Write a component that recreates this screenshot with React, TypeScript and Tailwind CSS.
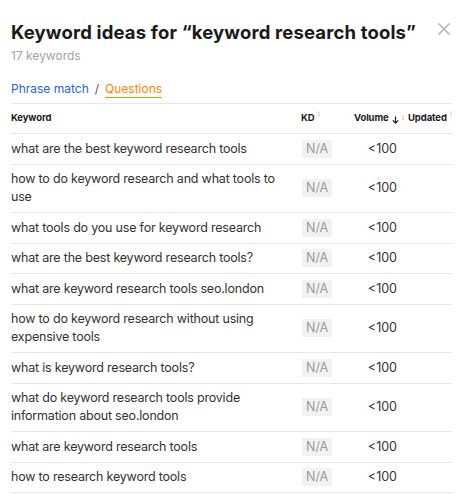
import React from "react";

const rows: { k: string; two?: boolean }[] = [
  { k: "what are the best keyword research tools" },
  { k: "how to do keyword research and what tools to use", two: true },
  { k: "what tools do you use for keyword research" },
  { k: "what are the best keyword research tools?" },
  { k: "what are keyword research tools seo.london" },
  { k: "how to do keyword research without using expensive tools", two: true },
  { k: "what is keyword research tools?" },
  { k: "what do keyword research tools provide information about seo.london", two: true },
  { k: "what are keyword research tools" },
  { k: "how to research keyword tools" },
];

const Info = () => (
  <span className="ml-[3px] inline-block text-[8px] leading-none text-[#c4c4c4] align-top relative top-[-1px] font-normal" style={{ fontFamily: "'DejaVu Serif', serif" }}>
    i
  </span>
);

export default function App() {
  return (
    <div
      className="w-[468px] h-[494px] bg-white overflow-hidden relative"
      style={{ fontFamily: "Inter, 'Liberation Sans', sans-serif" }}
    >
      <button className="absolute left-[437px] top-[22px] w-[14px] h-[14px] text-[#b5b5b5]">
        <svg width="14" height="14" viewBox="0 0 14 14">
          <path d="M1.5 1.5 L12.5 12.5 M12.5 1.5 L1.5 12.5" stroke="currentColor" strokeWidth="1.6" />
        </svg>
      </button>
      <div className="pl-[11px] pr-[16px] pt-[20px]">
        <h1 className="text-[18.5px] leading-[24px] font-bold text-[#1a1a1a] tracking-[0.15px]">
          Keyword ideas for “keyword research tools”
        </h1>
        <div className="text-[12px] leading-[16px] text-[#a3a3a3] mt-[4px]">17 keywords</div>
        <div className="mt-[17px] flex items-start text-[12px] leading-[16px] h-[17px]">
          <span className="text-[#2563eb]">Phrase match</span>
          <span className="text-[#555] mx-[6px]">/</span>
          <span className="text-[#ff8800] border-b border-[#ff8800]">Questions</span>
        </div>
        <div className="w-[441px] overflow-hidden border-t border-[#e6e6e6] mt-[5px]">
          <div className="w-[500px]">
            <div className="flex items-center h-[30px] border-b border-[#e6e6e6] text-[9.5px] tracking-[-0.1px] font-bold text-[#1a1a1a]">
              <div className="w-[290px]">Keyword</div>
              <div className="w-[53px]">KD<Info /></div>
              <div className="w-[54px] whitespace-nowrap flex items-center">
                Volume
                <svg className="ml-[3px] mt-[2px]" width="7" height="8" viewBox="0 0 7 8">
                  <path d="M3.5 0.5 V7 M0.8 4.4 L3.5 7.1 L6.2 4.4" stroke="#1a1a1a" strokeWidth="1.2" fill="none" />
                </svg>
                <Info />
              </div>
              <div className="w-[70px] whitespace-nowrap">Updated<Info /></div>
            </div>
            {rows.map((r, i) => (
              <div key={i} className="flex items-center py-[5.75px] border-b border-[#e6e6e6] text-[12.5px] tracking-[-0.2px] leading-[18px] text-[#333]">
                <div className="w-[290px] pr-[10px]">{r.k}</div>
                <div className="w-[53px]">
                  <span className="inline-block bg-[#f2f2f2] text-[#999] px-[4px] leading-[18px] ml-[1px] tracking-normal">N/A</span>
                </div>
                <div className="w-[43px] text-right text-[#333] tracking-normal">&lt;100</div>
                <div className="w-[70px]"></div>
              </div>
            ))}
          </div>
        </div>
      </div>
    </div>
  );
}
